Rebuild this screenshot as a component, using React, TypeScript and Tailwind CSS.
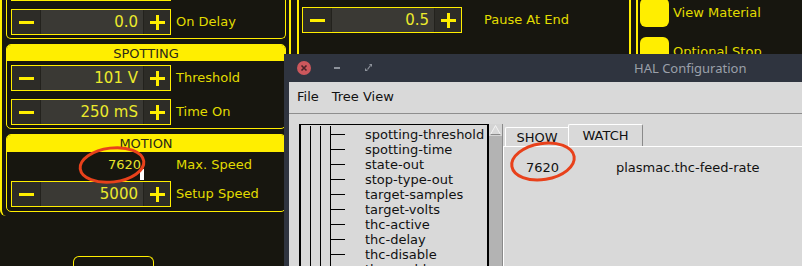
import React from "react";

const treeItems = [
  "spotting-threshold",
  "spotting-time",
  "state-out",
  "stop-type-out",
  "target-samples",
  "target-volts",
  "thc-active",
  "thc-delay",
  "thc-disable",
  "thc-enable",
];

const MinusGlyph = () => <span className="block h-[3px] w-[15px] bg-[#ffee00]" />;

const PlusGlyph = () => (
  <span className="relative block h-[15px] w-[15px]">
    <span className="absolute left-0 top-[6px] h-[3px] w-[15px] bg-[#ffee00]" />
    <span className="absolute left-[6px] top-0 h-[15px] w-[3px] bg-[#ffee00]" />
  </span>
);

const SpinBox = ({ value }: { value: string }) => (
  <div className="flex h-[26px] w-[160px] border border-[#ffee00] bg-[#3a3934]">
    <div className="flex w-[29px] items-center justify-center border-r border-[#23221d] bg-[#2d2c27]">
      <MinusGlyph />
    </div>
    <div className="flex flex-1 items-center justify-end pr-[5px] text-[15px] text-[#ecea2c]">
      {value}
    </div>
    <div className="flex w-[27px] items-center justify-center border-l border-[#23221d] bg-[#2d2c27]">
      <PlusGlyph />
    </div>
  </div>
);

const SpinRow = ({ value, label }: { value: string; label: string }) => (
  <div className="flex items-center gap-[5px]">
    <SpinBox value={value} />
    <span className="text-[13px] text-[#e2dc00]">{label}</span>
  </div>
);

const GroupHeader = ({ title, h }: { title: string; h: string }) => (
  <div
    className={`flex ${h} items-center justify-center bg-[#ffee00] text-[13px] leading-none text-[#2a2918]`}
  >
    {title}
  </div>
);

const LeftPanel = () => (
  <div className="flex h-[221px] w-[289px] flex-col rounded-bl-[6px] border-l-2 border-[#ffee00]">
    <div className="ml-[4px] flex w-[280px] flex-col rounded-b-[5px] border-x border-b border-[#ffee00] px-[4px] pb-[3px]">
      <div className="h-px w-[160px] bg-[#ffee00]" />
      <div className="mt-[8px]">
        <SpinRow value="0.0" label="On Delay" />
      </div>
    </div>

    <div className="ml-[4px] mt-[5px] flex w-[280px] flex-col overflow-hidden rounded-[5px] border border-[#ffee00] pb-[3px]">
      <GroupHeader title="SPOTTING" h="h-[16px]" />
      <div className="mt-[4px] flex flex-col gap-[8px] px-[4px]">
        <SpinRow value="101 V" label="Threshold" />
        <SpinRow value="250 mS" label="Time On" />
      </div>
    </div>

    <div className="ml-[4px] mt-[5px] flex w-[280px] flex-col overflow-hidden rounded-[5px] border border-[#ffee00] pb-[4px]">
      <GroupHeader title="MOTION" h="h-[17px]" />
      <div className="flex h-[29px] items-center gap-[5px] px-[4px] pb-[4px]">
        <div className="relative flex h-full w-[160px] items-center justify-end pr-[30px] text-[13px] text-[#e8e42a]">
          7620
          <span className="absolute bottom-[-3px] right-[27px] h-[11px] w-[4px] bg-white" />
        </div>
        <span className="text-[13px] text-[#e2dc00]">Max. Speed</span>
      </div>
      <div className="px-[4px]">
        <SpinRow value="5000" label="Setup Speed" />
      </div>
    </div>
  </div>
);

const MiddlePanel = () => (
  <div className="flex h-full w-[340px] border-l-2 border-[#ffee00] pl-[6px]">
    <div className="flex h-full flex-1 border-l-2 border-[#ffee00] pl-[3px] pt-[7px]">
      <div className="flex h-[26px] items-center gap-[22px]">
        <SpinBox value="0.5" />
        <span className="text-[13px] text-[#e2dc00]">Pause At End</span>
      </div>
    </div>
  </div>
);

const RightPanel = () => (
  <div className="flex h-full flex-1 border-l-2 border-[#ffee00] pl-[5px]">
    <div className="flex h-full flex-1 flex-col gap-[10px] border-l-2 border-[#ffee00] pl-[2px]">
      <div className="-mt-[2px] flex items-center gap-[4px]">
        <div className="h-[29px] w-[29px] rounded-[6px] bg-[#ffee00]" />
        <span className="text-[13px] text-[#e2dc00]">View Material</span>
      </div>
      <div className="flex items-center gap-[4px]">
        <div className="h-[29px] w-[29px] rounded-[6px] bg-[#ffee00]" />
        <span className="text-[13px] text-[#e2dc00]">Optional Stop</span>
      </div>
    </div>
  </div>
);

const TreeLines = () => (
  <>
    <span className="ml-[9px] h-full w-px bg-black" />
    <span className="ml-[9px] h-full w-px bg-black" />
    <span className="ml-[9px] h-full w-px bg-black" />
  </>
);

const HalWindow = () => (
  <div className="absolute left-[284px] top-[54px] flex h-[212px] w-[518px] flex-col bg-[#2f343f] pl-[5px]">
    {/* title bar */}
    <div className="relative flex h-[28px] items-center">
      <svg width="100" height="28" viewBox="0 0 100 28" className="shrink-0">
        <circle cx="15" cy="14" r="7" fill="#cc575c" />
        <path d="M12.5 11.5 L17.5 16.5 M17.5 11.5 L12.5 16.5" stroke="#4a2328" strokeWidth="1.6" />
        <rect x="45" y="13" width="6" height="2" fill="#8d929b" />
        <path d="M80 10 L83 10 L83 13 Z M76 14 L76 17 L79 17 Z" fill="#8d929b" />
        <path d="M78.5 15.5 L81.5 11.5" stroke="#8d929b" strokeWidth="1.2" />
      </svg>
      <span className="absolute left-[345px] top-[5px] font-['Noto_Sans',sans-serif] text-[13px] text-[#9ba0aa]">
        HAL Configuration
      </span>
    </div>

    <div className="flex flex-1 flex-col bg-[#d9d9d9] text-[13px] text-[#111]">
      {/* menu bar */}
      <div className="flex h-[32px] items-center gap-[13px] border-b border-[#8e8e8e] pb-[1px] pl-[8px]">
        <span>File</span>
        <span>Tree View</span>
      </div>

      <div className="flex flex-1 pl-[10px] pt-[10px]">
        {/* tree */}
        <div className="flex h-full w-[190px] flex-col border-x-2 border-t border-black pt-px">
          <div className="flex h-px">
            <TreeLines />
          </div>
          {treeItems.map((item) => (
            <div key={item} className="flex h-[15px] items-stretch">
              <TreeLines />
              <span className="h-px w-[14px] self-center bg-black" />
              <span className="ml-[20px] whitespace-nowrap leading-[15px]">{item}</span>
            </div>
          ))}
        </div>

        {/* scrollbar */}
        <div className="flex h-full w-[14px] flex-col border-r border-[#8a8a8a] bg-[#b3b3b3]">
          <svg width="13" height="12" viewBox="0 0 13 12">
            <rect x="0" y="0" width="13" height="12" fill="#d4d4d4" />
            <path d="M6.5 1.5 L11.5 10.5 L1.5 10.5 Z" fill="#d9d9d9" stroke="#f4f4f4" strokeWidth="1" />
            <path d="M11.5 10.5 L1.5 10.5" stroke="#8a8a8a" strokeWidth="1" />
          </svg>
        </div>

        {/* notebook */}
        <div className="flex flex-1 flex-col">
          <div className="flex h-[22px] items-end pl-[2px]">
            <div className="flex h-[19px] w-[63px] items-center justify-center rounded-tl-[2px] border-l border-t border-white pt-[2px]">
              SHOW
            </div>
            <div className="flex h-[22px] w-[75px] items-center justify-center rounded-t-[2px] border-x border-t border-l-white border-r-[#8a8a8a] border-t-white">
              WATCH
            </div>
          </div>
          <div className="flex flex-1 items-start border-l border-t border-white pt-[13px]">
            <span className="ml-[22px] w-[90px] leading-[15px]">7620</span>
            <span className="leading-[15px]">plasmac.thc-feed-rate</span>
          </div>
        </div>
      </div>
    </div>
  </div>
);

const App = () => {
  return (
    <div className="relative h-[266px] w-[802px] overflow-hidden bg-[#17160f] font-['DejaVu_Sans',sans-serif]">
      <div className="flex h-full">
        <div className="flex flex-col">
          <LeftPanel />
          <div className="ml-[73px] mt-[40px] h-[10px] w-[81px] rounded-t-[6px] border-x border-t border-[#ffee00]" />
        </div>
        <MiddlePanel />
        <RightPanel />
      </div>

      <HalWindow />

      <svg
        className="pointer-events-none absolute left-0 top-0"
        width="802"
        height="266"
        viewBox="0 0 802 266"
      >
        <ellipse cx="112" cy="165" rx="32" ry="17" fill="none" stroke="#e8411b" strokeWidth="3" transform="rotate(-7 112 165)" />
        <ellipse cx="543" cy="161.5" rx="31.5" ry="18" fill="none" stroke="#e8411b" strokeWidth="3" transform="rotate(-9 543 161.5)" />
      </svg>
    </div>
  );
};

export default App;
